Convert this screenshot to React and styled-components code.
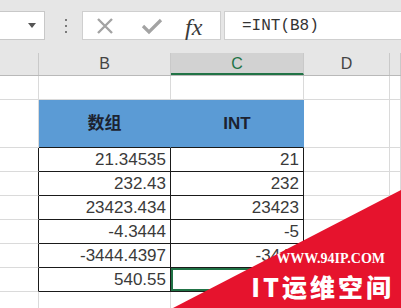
import React from 'react';
import styled, { createGlobalStyle } from 'styled-components';

const GlobalStyle = createGlobalStyle`
  body {
    margin: 0;
    background: #fff;
    font-family: "Liberation Sans", Arial, sans-serif;
  }
`;

const Screen = styled.div`
  position: relative;
  width: 401px;
  height: 308px;
  overflow: hidden;
  background: #fff;
`;

const Toolbar = styled.div`
  display: flex;
  align-items: flex-start;
  height: 53px;
  padding-top: 11px;
  box-sizing: border-box;
  background: #e6e6e6;
`;

const NameBox = styled.div`
  display: flex;
  align-items: center;
  justify-content: flex-end;
  width: 45px;
  height: 29px;
  padding-right: 8px;
  box-sizing: border-box;
  background: #fff;
  border: 1px solid #c8c8c8;
  border-left: none;
`;

const Caret = styled.span`
  width: 0;
  height: 0;
  border-left: 4px solid transparent;
  border-right: 4px solid transparent;
  border-top: 5px solid #555;
`;

const Dots = styled.div`
  display: flex;
  flex-direction: column;
  gap: 4px;
  margin: 8px 15px 0 20px;

  span {
    width: 2px;
    height: 2px;
    background: #7a7a7a;
  }
`;

const FuncBox = styled.div`
  display: flex;
  align-items: center;
  width: 139px;
  height: 29px;
  box-sizing: border-box;
  padding-left: 13px;
  background: #fff;
  border: 1px solid #cfcfcf;
`;

const IconSlot = styled.span`
  display: flex;
  margin-right: ${(p) => p.$gap}px;
`;

const Fx = styled.span`
  font-family: "Liberation Serif", "Times New Roman", serif;
  font-style: italic;
  font-size: 24px;
  color: #3a3a3a;
  line-height: 1;
  margin-top: 2px;
`;

const FormulaBar = styled.div`
  flex: 1;
  display: flex;
  align-items: center;
  height: 29px;
  margin-left: 3px;
  padding-left: 17px;
  box-sizing: border-box;
  background: #fff;
  border: 1px solid #cfcfcf;
  border-right: none;
  font-family: "Liberation Mono", "Courier New", monospace;
  font-size: 16px;
  color: #333;
`;

const cols = '39px 132px 133px 86px 1fr';

const HeaderRow = styled.div`
  display: grid;
  grid-template-columns: ${cols};
  height: 23px;
  box-sizing: border-box;
  background: #e6e6e6;
  border-bottom: 1px solid #b9b9b9;
`;

const ColHead = styled.div`
  display: flex;
  align-items: center;
  justify-content: center;
  box-sizing: border-box;
  border-right: 1px solid #c9c9c9;
  font-size: 16px;
  color: ${(p) => (p.$active ? '#217346' : '#444')};
  background: ${(p) => (p.$active ? '#d2d2d2' : 'transparent')};
  border-bottom: ${(p) => (p.$active ? '2px solid #217346' : 'none')};
  padding-top: ${(p) => (p.$active ? '2px' : '0')};
`;

const Sheet = styled.div`
  display: grid;
  grid-template-columns: ${cols};
  grid-auto-rows: 24px;
`;

const Cell = styled.div`
  display: flex;
  align-items: ${(p) => (p.$head ? 'center' : 'flex-end')};
  justify-content: ${(p) => (p.$head ? 'center' : 'flex-end')};
  box-sizing: border-box;
  padding: ${(p) => (p.$head ? '0' : '0 4px 1px 0')};
  border-right: 1px solid ${(p) => p.$r || '#dadada'};
  border-bottom: 1px solid ${(p) => p.$b || '#dadada'};
  grid-row: ${(p) => (p.$span ? `span ${p.$span}` : 'auto')};
  background: ${(p) => (p.$head ? '#5b9bd5' : '#fff')};
  box-shadow: ${(p) => (p.$selected ? 'inset 0 0 0 2px #217346' : 'none')};
  font-size: 17px;
  font-weight: ${(p) => (p.$head ? 700 : 400)};
  font-family: "Liberation Sans", "Noto Sans CJK SC", sans-serif;
  color: ${(p) => (p.$head ? '#1c2230' : '#3a3a3a')};
  line-height: 20px;
  white-space: nowrap;
`;

const Watermark = styled.div`
  position: absolute;
  right: 0;
  bottom: 0;
  width: 228px;
  height: 118px;
  background: #e6132d;
  clip-path: polygon(0 100%, 100% 0, 100% 100%);
  display: flex;
  flex-direction: column;
  align-items: flex-end;
  justify-content: flex-end;
  padding: 0 7px 7px 0;
  box-sizing: border-box;
  color: #fff;
`;

const Site = styled.div`
  font-family: "Liberation Serif", "Times New Roman", serif;
  font-weight: 700;
  font-size: 14px;
  margin-right: 9px;
  line-height: 16px;
`;

const Brand = styled.div`
  font-family: "Noto Sans CJK SC", "Noto Sans", sans-serif;
  font-weight: 900;
  font-size: 25px;
  letter-spacing: 3px;
  line-height: 30px;
  margin-top: 4px;
`;

const data = [
  ['21.34535', '21'],
  ['232.43', '232'],
  ['23423.434', '23423'],
  ['-4.3444', '-5'],
  ['-3444.4397', '-3445'],
  ['540.55', ''],
];

function App() {
  return (
    <Screen>
      <GlobalStyle />
      <Toolbar>
        <NameBox>
          <Caret />
        </NameBox>
        <Dots>
          <span />
          <span />
          <span />
        </Dots>
        <FuncBox>
          <IconSlot $gap={27}>
            <svg width="18" height="18" viewBox="0 0 18 18">
              <path d="M2 2 L16 16 M16 2 L2 16" stroke="#a3a3a3" strokeWidth="2.4" fill="none" />
            </svg>
          </IconSlot>
          <IconSlot $gap={22}>
            <svg width="22" height="18" viewBox="0 0 22 18">
              <path d="M2 9 L8 15 L20 3" stroke="#a3a3a3" strokeWidth="3.2" fill="none" />
            </svg>
          </IconSlot>
          <Fx>fx</Fx>
        </FuncBox>
        <FormulaBar>=INT(B8)</FormulaBar>
      </Toolbar>
      <HeaderRow>
        <ColHead />
        <ColHead>B</ColHead>
        <ColHead $active>C</ColHead>
        <ColHead>D</ColHead>
        <ColHead />
      </HeaderRow>
      <Sheet>
        <Cell />
        <Cell />
        <Cell />
        <Cell />
        <Cell />

        <Cell $span={2} />
        <Cell $head $span={2} $b="#1a1a1a" $r="#5b9bd5">数组</Cell>
        <Cell $head $span={2} $b="#1a1a1a" $r="#5b9bd5">INT</Cell>
        <Cell $span={2} />
        <Cell $span={2} />

        {data.map(([b, c], i) => (
          <React.Fragment key={i}>
            <Cell $r="#1a1a1a" />
            <Cell $r="#1a1a1a" $b="#1a1a1a">{b}</Cell>
            <Cell $r="#1a1a1a" $b="#1a1a1a" $selected={i === 5}>{c}</Cell>
            <Cell />
            <Cell />
          </React.Fragment>
        ))}
        <Cell />
        <Cell />
        <Cell />
        <Cell />
        <Cell />
      </Sheet>
      <Watermark>
        <Site>WWW.94IP.COM</Site>
        <Brand>IT运维空间</Brand>
      </Watermark>
    </Screen>
  );
}

export default App;
